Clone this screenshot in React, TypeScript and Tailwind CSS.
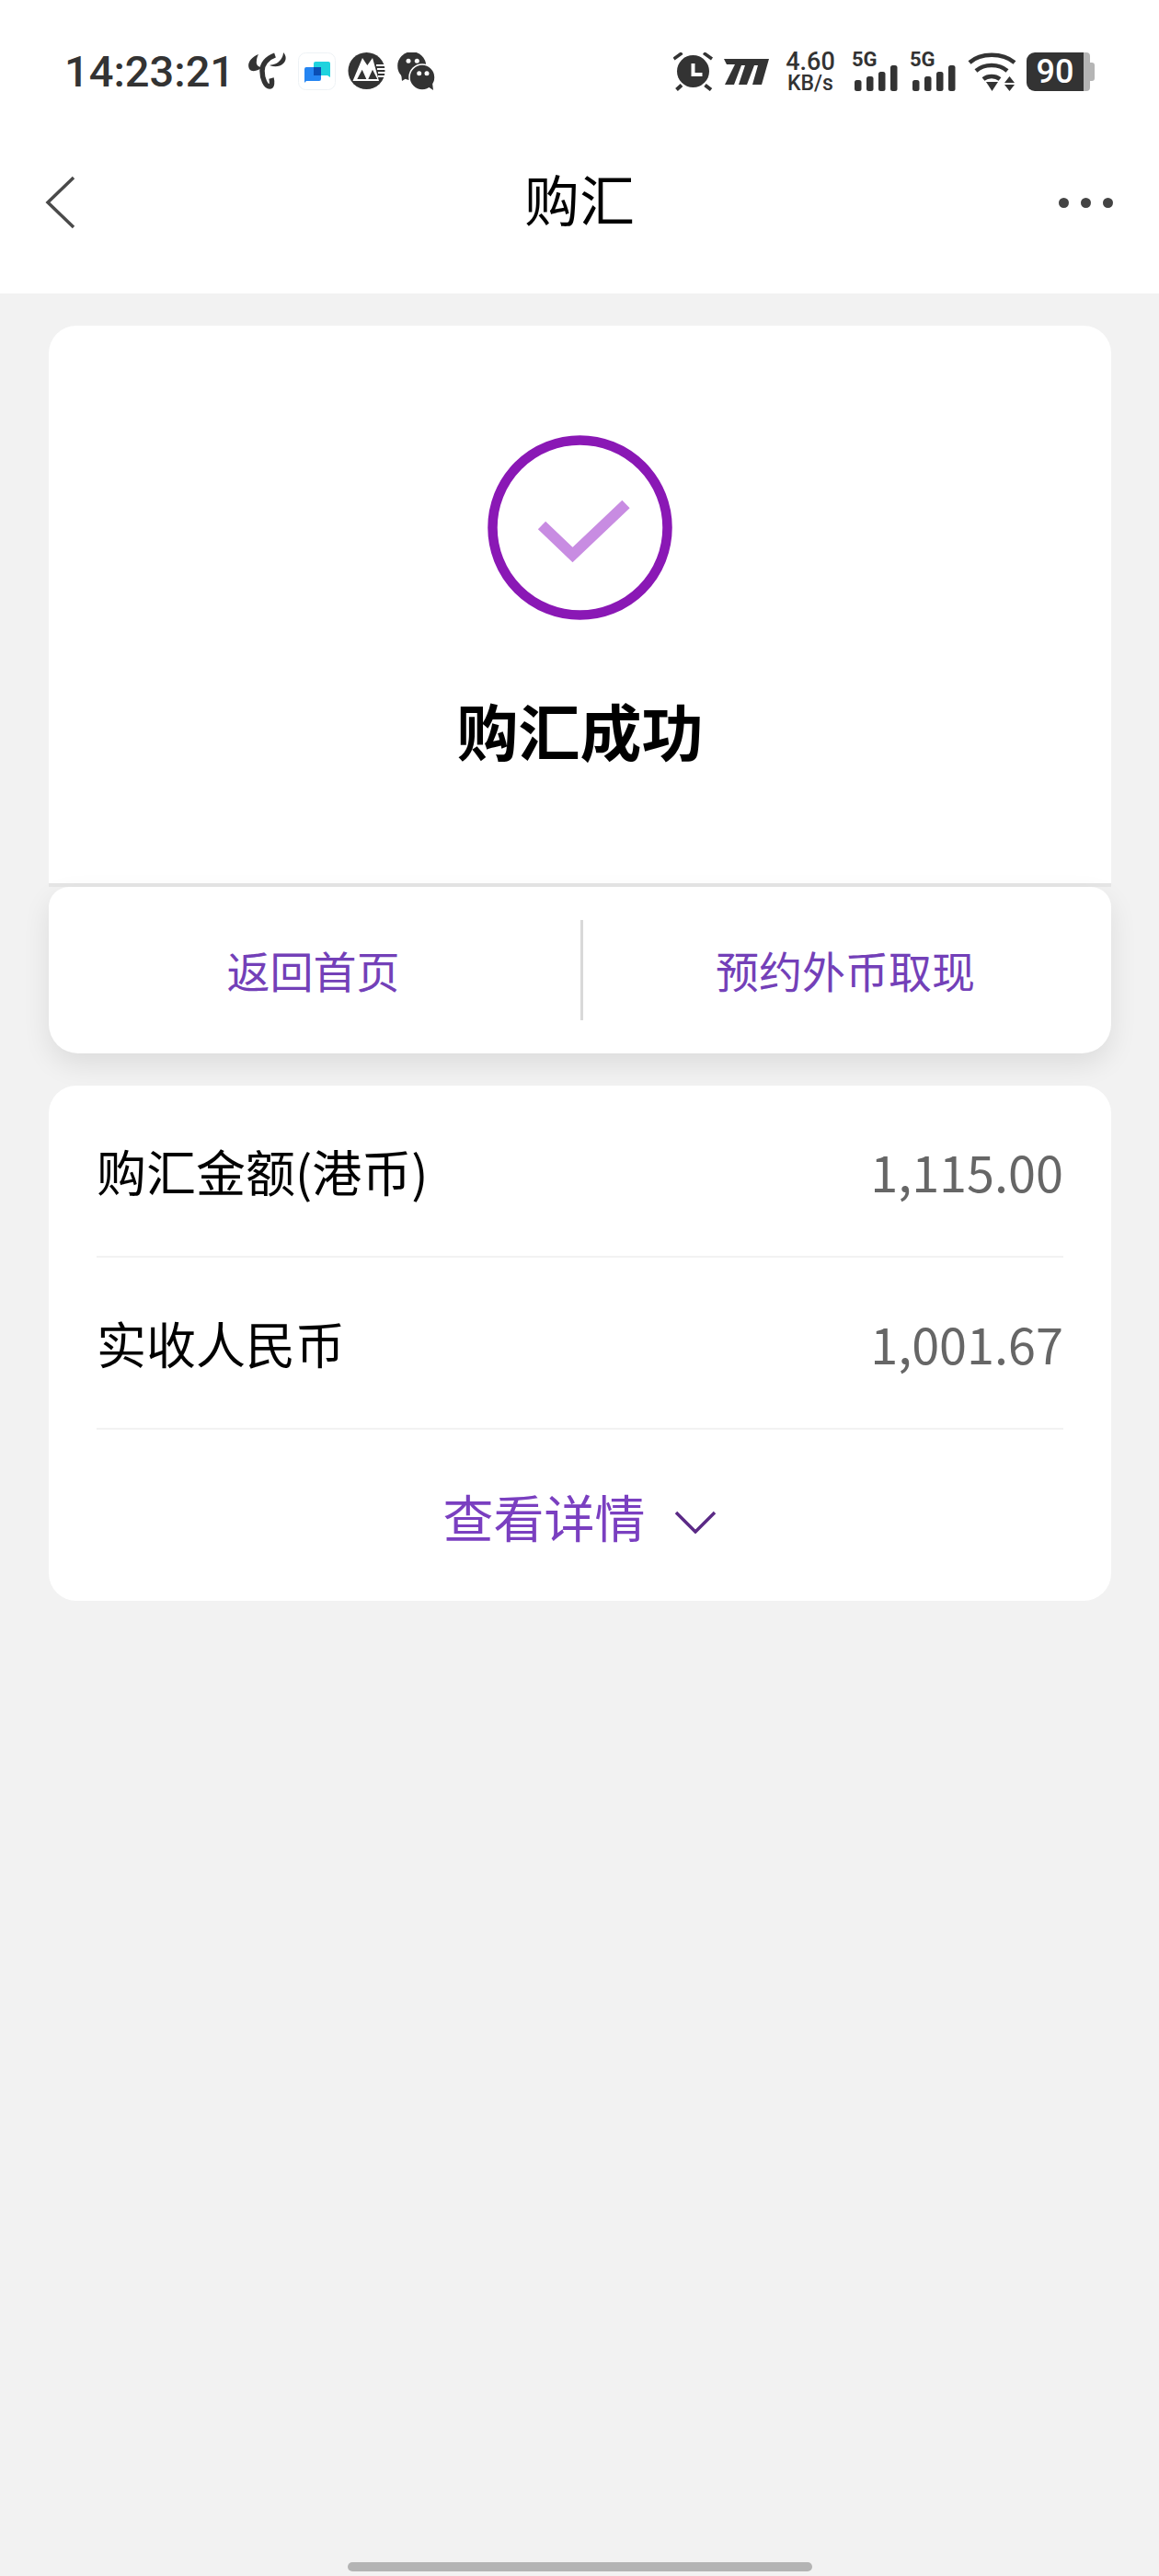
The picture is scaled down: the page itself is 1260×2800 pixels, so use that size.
import React from 'react'

const cjk = "font-['Noto_Sans_CJK_SC','Noto_Sans',sans-serif]"

function TelecomIcon() {
  return (
    <svg width="41" height="40" viewBox="0 0 41 40" fill="none">
      <path d="M11 2C3 5-2 12 1 18c3 4 10 2 14-2-4 0-7-2-6-7 0-3 1-5 2-7z" fill="#333" />
      <path d="M38 0c4 4 3 9 0 12-4 4-10 4-15 2 5-1 9-2 12-6 2-3 3-5 3-8z" fill="#333" />
      <path d="M29 3C20 6 15 13 15 20c0 9 4 17 8 17 3 0 3-5 2-9" stroke="#333" strokeWidth="5.500" />
    </svg>
  )
}

function ChatAppIcon() {
  return (
    <svg width="41" height="41" viewBox="0 0 41 41">
      <rect x="0.5" y="0.5" width="40" height="40" rx="8" fill="#fff" stroke="#eef2f5" />
      <path d="M17 12a2 2 0 0 1 2-2h14a2 2 0 0 1 2 2v15l-3-2H17z" fill="#1fd3de" />
      <path d="M7 18a2 2 0 0 1 2-2h14a2 2 0 0 1 2 2v11a2 2 0 0 1-2 2H9l-2 2z" fill="#2585f2" />
      <path d="M17 16h8v9H17z" fill="#0b4fb5" />
    </svg>
  )
}

function BankIcon() {
  return (
    <svg width="41" height="40" viewBox="0 0 41 40">
      <circle cx="20.5" cy="20" r="20" fill="#333" />
      <path d="M5.500 31 16 6l5.300 8L27 6l7 25z" fill="#fff" />
      <path d="M15.700 18.700 10.300 29h10zM27 18.700 22.300 29h10z" fill="#333" />
      <path d="M31 13h10v2H31zM32 17h9v2h-9zM33 21h8v2h-8zM33 25h7v2h-7z" fill="#fff" />
    </svg>
  )
}

function WeChatIcon() {
  return (
    <svg width="41" height="41" viewBox="0 0 41 41">
      <circle cx="15.700" cy="14.700" r="15.500" fill="#333" />
      <path d="M4 22l1 9 8-5z" fill="#333" />
      <circle cx="12" cy="9.300" r="2.500" fill="#fff" />
      <circle cx="21.300" cy="9.300" r="2.500" fill="#fff" />
      <circle cx="27" cy="27" r="14" fill="#333" stroke="#fff" strokeWidth="1.500" />
      <path d="M33 37l6 4-1-8z" fill="#333" />
      <circle cx="23.700" cy="22.700" r="2.500" fill="#fff" />
      <circle cx="32" cy="22.700" r="2.500" fill="#fff" />
    </svg>
  )
}

function AlarmIcon() {
  return (
    <svg width="44" height="42" viewBox="0 0 44 42" fill="none">
      <circle cx="21.500" cy="20.500" r="17.500" fill="#333" />
      <path d="M0.500 7 9.500 0.500M33 0.500l9 6.500" stroke="#333" strokeWidth="3.500" />
      <path d="M3.500 40.500 9 35.500M41 40.500l-6.500-5" stroke="#333" strokeWidth="4" />
      <path d="M21.500 12v12h10" stroke="#fff" strokeWidth="4" />
    </svg>
  )
}

function SignalBars() {
  return (
    <svg width="47" height="28" viewBox="0 0 47 28" fill="#333">
      <rect x="0" y="16" width="7.500" height="12" rx="2.500" />
      <rect x="13" y="12" width="7.500" height="16" rx="2.500" />
      <rect x="26" y="7" width="7.500" height="21" rx="2.500" />
      <rect x="39" y="0" width="7.500" height="28" rx="2.500" />
    </svg>
  )
}

function WifiIcon() {
  return (
    <svg width="53" height="42" viewBox="0 0 53 42" fill="none">
      <path d="M2 11C14 0 38 0 51 11" stroke="#333" strokeWidth="4.500" />
      <path d="M9 20c9-8 25-8 34 0" stroke="#333" strokeWidth="4.500" />
      <path d="M17 29c5-4 13-4 18 0" stroke="#333" strokeWidth="4.500" />
      <path d="M20 32h13l-6.500 10z" fill="#333" />
      <path d="M45.500 26l5.500 7H40zM40 35h11l-5.500 7z" fill="#333" />
    </svg>
  )
}

function StatusBar() {
  return (
    <div className="h-[124px] pl-[70px] pr-[70px] pt-[57px] flex items-start justify-between">
      <div className="flex items-start">
        <span className="text-[#333] text-[47px] leading-[42px] font-medium w-[200px] font-['Roboto',sans-serif]">14:23:21</span>
        <div className="flex items-start gap-[13px]">
          <TelecomIcon />
          <ChatAppIcon />
          <BankIcon />
          <WeChatIcon />
        </div>
      </div>
      <div className="flex items-start">
        <AlarmIcon />
        <svg className="ml-[11px] mt-[7px]" width="50" height="28" viewBox="0 0 50 28" fill="#333">
          <path d="M0 0H49L41 28H31L37 7H33L25 28H16L23 7H19L11 28H1L12 6H3Z" />
        </svg>
        <div className="ml-[17px] w-[54px] flex flex-col items-center text-[#333] font-['Roboto',sans-serif] font-medium">
          <span className="text-[27px] leading-[20px]">4.60</span>
          <span className="text-[23px] leading-[22px] mt-[3px]">KB/s</span>
        </div>
        <div className="ml-[18px] w-[50px] relative h-[42px]">
          <span className="absolute left-0 top-[-4px] text-[#333] text-[22px] leading-[24px] font-bold font-['Roboto',sans-serif]">5G</span>
          <div className="absolute left-[3px] top-[14px]"><SignalBars /></div>
        </div>
        <div className="ml-[13px] w-[50px] relative h-[42px]">
          <span className="absolute left-0 top-[-4px] text-[#333] text-[22px] leading-[24px] font-bold font-['Roboto',sans-serif]">5G</span>
          <div className="absolute left-[3px] top-[14px]"><SignalBars /></div>
        </div>
        <div className="ml-[13px]"><WifiIcon /></div>
        <div className="ml-[11px] flex items-center">
          <div className="w-[62px] h-[42px] bg-[#333] rounded-l-[9px] flex items-center justify-center text-white text-[36px] font-medium font-['Roboto',sans-serif]">90</div>
          <div className="w-[7px] h-[42px] bg-[#b5b5b5] rounded-r-[4px]" />
          <div className="w-[5px] h-[20px] bg-[#b5b5b5] rounded-r-[3px]" />
        </div>
      </div>
    </div>
  )
}

function NavBar() {
  return (
    <div className={`h-[195px] flex items-start justify-between relative ${cjk}`}>
      <svg className="ml-[48px] mt-[66px]" width="36" height="60" viewBox="0 0 36 60" fill="none">
        <path d="M32 3 4 30l28 27" stroke="#4a4a4a" strokeWidth="3.500" />
      </svg>
      <span className="absolute left-0 right-0 top-[57px] text-center text-[60px] leading-[68px] text-black">购汇</span>
      <div className="mt-[91px] mr-[50px] flex gap-[13px]">
        <div className="w-[11px] h-[11px] rounded-full bg-[#444]" />
        <div className="w-[11px] h-[11px] rounded-full bg-[#444]" />
        <div className="w-[11px] h-[11px] rounded-full bg-[#444]" />
      </div>
    </div>
  )
}

function ResultCard() {
  return (
    <div className="relative">
      <div className="bg-white rounded-t-[30px] h-[610px] flex flex-col items-center border-b-4 border-[#e6e6e6]">
        <svg className="mt-[119px]" width="201" height="201" viewBox="0 0 201 201" fill="none">
          <circle cx="100.500" cy="100.500" r="95" stroke="#8a18b5" strokeWidth="10.500" />
          <path d="M59 98l33.500 32 58-55" stroke="#c88ce2" strokeWidth="12" />
        </svg>
        <h1 className="mt-[81px] text-[67px] leading-[76px] font-bold text-black">购汇成功</h1>
      </div>
      <div className="bg-white rounded-t-[22px] rounded-b-[32px] h-[181px] flex items-center shadow-[0_12px_30px_rgba(0,0,0,0.09)] text-[47px] text-[#7340b8]">
        <div className="w-[578px] pr-[3px] text-center">返回首页</div>
        <div className="w-[3px] h-[109px] bg-[#d9d9d9]" />
        <div className="flex-1 pr-[4px] text-center">预约外币取现</div>
      </div>
    </div>
  )
}

function Row({ label, value }: { label: string; value: string }) {
  return (
    <div className="h-[187px] border-b-2 border-[#f2f2f2] flex items-center justify-between">
      <span className="text-[54px] text-black">{label}</span>
      <span className="text-[54px] text-[#666]">{value}</span>
    </div>
  )
}

function DetailCard() {
  return (
    <div className="mt-[35px] bg-white rounded-[30px] h-[560px] px-[52px]">
      <Row label="购汇金额(港币)" value="1,115.00" />
      <Row label="实收人民币" value="1,001.67" />
      <div className="h-[186px] flex items-center justify-center gap-[31px] text-[55px] text-[#7a3fc0] pr-[1px]">
        <span>查看详情</span>
        <svg className="mt-[14px]" width="46" height="25" viewBox="0 0 46 25" fill="none">
          <path d="M2 2l21 21L44 2" stroke="#5b2a86" strokeWidth="3.500" />
        </svg>
      </div>
    </div>
  )
}

export default function App() {
  return (
    <div className={`w-[1260px] h-[2800px] bg-[#f2f2f2] flex flex-col ${cjk}`}>
      <div className="bg-white">
        <StatusBar />
        <NavBar />
      </div>
      <div className="flex-1 pl-[53px] pr-[52px] pt-[35px] flex flex-col">
        <ResultCard />
        <DetailCard />
        <div className="mt-auto mb-[5px] mx-auto w-[505px] h-[10px] rounded-full bg-[#b4b4b4]" />
      </div>
    </div>
  )
}
